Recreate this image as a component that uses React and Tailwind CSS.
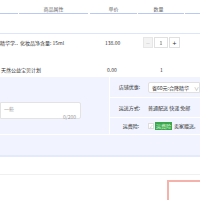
import React from 'react';

const font = { fontFamily: '"Noto Sans CJK SC", "Noto Sans", sans-serif' };

// 购物车/确认订单 片段
export default function App() {
    return (
        <div className="w-[200px] h-[200px] overflow-hidden bg-white text-[5px] leading-[6px] text-[#333]" style={font}>
            {/* 表头 */}
            <div className="flex h-[14px] text-[#666]">
                <div className="w-[18px] border-b border-[#b9c9f3]" />
                <div className="ml-[1px] w-[69px] border-b border-[#b9c9f3] flex items-center justify-center pt-[4px]">商品属性</div>
                <div className="ml-[2px] w-[47px] border-b border-[#b9c9f3] flex items-center justify-center pt-[4px]">单价</div>
                <div className="ml-[1px] w-[46px] border-b border-[#b9c9f3] flex items-center justify-center pt-[4px] pr-[5px]">数量</div>
                <div className="ml-[1px] flex-1 border-b border-[#b9c9f3]" />
            </div>

            <div className="h-[20px] border-b border-[#dde5fb]" />

            {/* 商品行 */}
            <div className="flex h-[26px] pt-[4px]">
                <div className="w-[18px] pt-[2px] whitespace-nowrap overflow-hidden">精华学...</div>
                <div className="w-[87px] pl-[2px] pt-[2px] whitespace-nowrap">化妆品净含量: 15ml</div>
                <div className="w-[38px] pt-[2px]">138.00</div>
                <div className="flex h-[11px] mt-[-1px]">
                    <div className="w-[10px] h-[11px] bg-[#f3f3f3] border border-[#e6e6e6] flex items-center justify-center text-[#ccc] text-[7px]">−</div>
                    <div className="ml-[1px] w-[14px] h-[11px] border border-[#e0e0e0] flex items-center justify-center">1</div>
                    <div className="ml-[1px] w-[11px] h-[11px] border border-[#e0e0e0] flex items-center justify-center text-[7px]">+</div>
                </div>
            </div>

            <div className="flex h-[17px] items-start pt-[7px] border-b border-white">
                <div className="w-[107px] pl-[1px] whitespace-nowrap">天然公益宝贝计划</div>
                <div className="w-[53px]">0.00</div>
                <div>1</div>
            </div>

            {/* 留言 + 优惠 */}
            <div className="bg-[#f1f4ff] border-b-2 border-[#e3eafc] h-[80px]">
                <div className="flex h-[58px] border-b border-white">
                    <div className="w-[113px] pt-[25px]">
                        <div className="w-[81px] h-[17px] bg-white border border-[#e3e3e3] rounded-r-[2px] px-[3px] pt-[3px] text-[#999]">
                            <div>一些</div>
                            <div className="text-right mt-[2px] pr-[1px]">0/200</div>
                        </div>
                    </div>
                    <div className="flex-1 border-l border-white">
                        <div className="flex items-center h-[21px] border-b border-white">
                            <div className="w-[30px] text-right">店铺优惠:</div>
                            <div className="ml-[8px] flex-1 h-[11px] mb-[-1px] bg-white border border-[#e0e0e0] rounded-l-[2px] flex items-center pl-[3px] whitespace-nowrap overflow-hidden">
                                省60元:合降精华
                                <span className="ml-[5px] text-[#999]">∨</span>
                            </div>
                        </div>
                        <div className="flex items-center h-[20px] border-b border-white">
                            <div className="w-[30px] text-right">运送方式:</div>
                            <div className="ml-[8px] whitespace-nowrap">普通配送 快递 免邮</div>
                        </div>
                        <div className="flex items-center h-[16px]">
                            <div className="w-[29px] text-right">运费险:</div>
                            <div className="ml-[9px] w-[6px] h-[6px] bg-white border border-[#ddd] flex items-center justify-center text-[#bbb] text-[4px]">✓</div>
                            <div className="ml-[1px] px-[1px] h-[8px] bg-[#3aa64c] text-[#d8f5d8] flex items-center">运费险</div>
                            <div className="ml-[2px] whitespace-nowrap">卖家赠送,</div>
                        </div>
                    </div>
                </div>
            </div>

            {/* 底部 */}
            <div className="h-[18px] border-b border-[#f0f0f0]" />
            <div className="flex justify-end pt-[5px]">
                <div className="w-[33px] h-[20px] border-l-2 border-t-2 border-[#f5b2aa]" />
            </div>
        </div>
    );
}
